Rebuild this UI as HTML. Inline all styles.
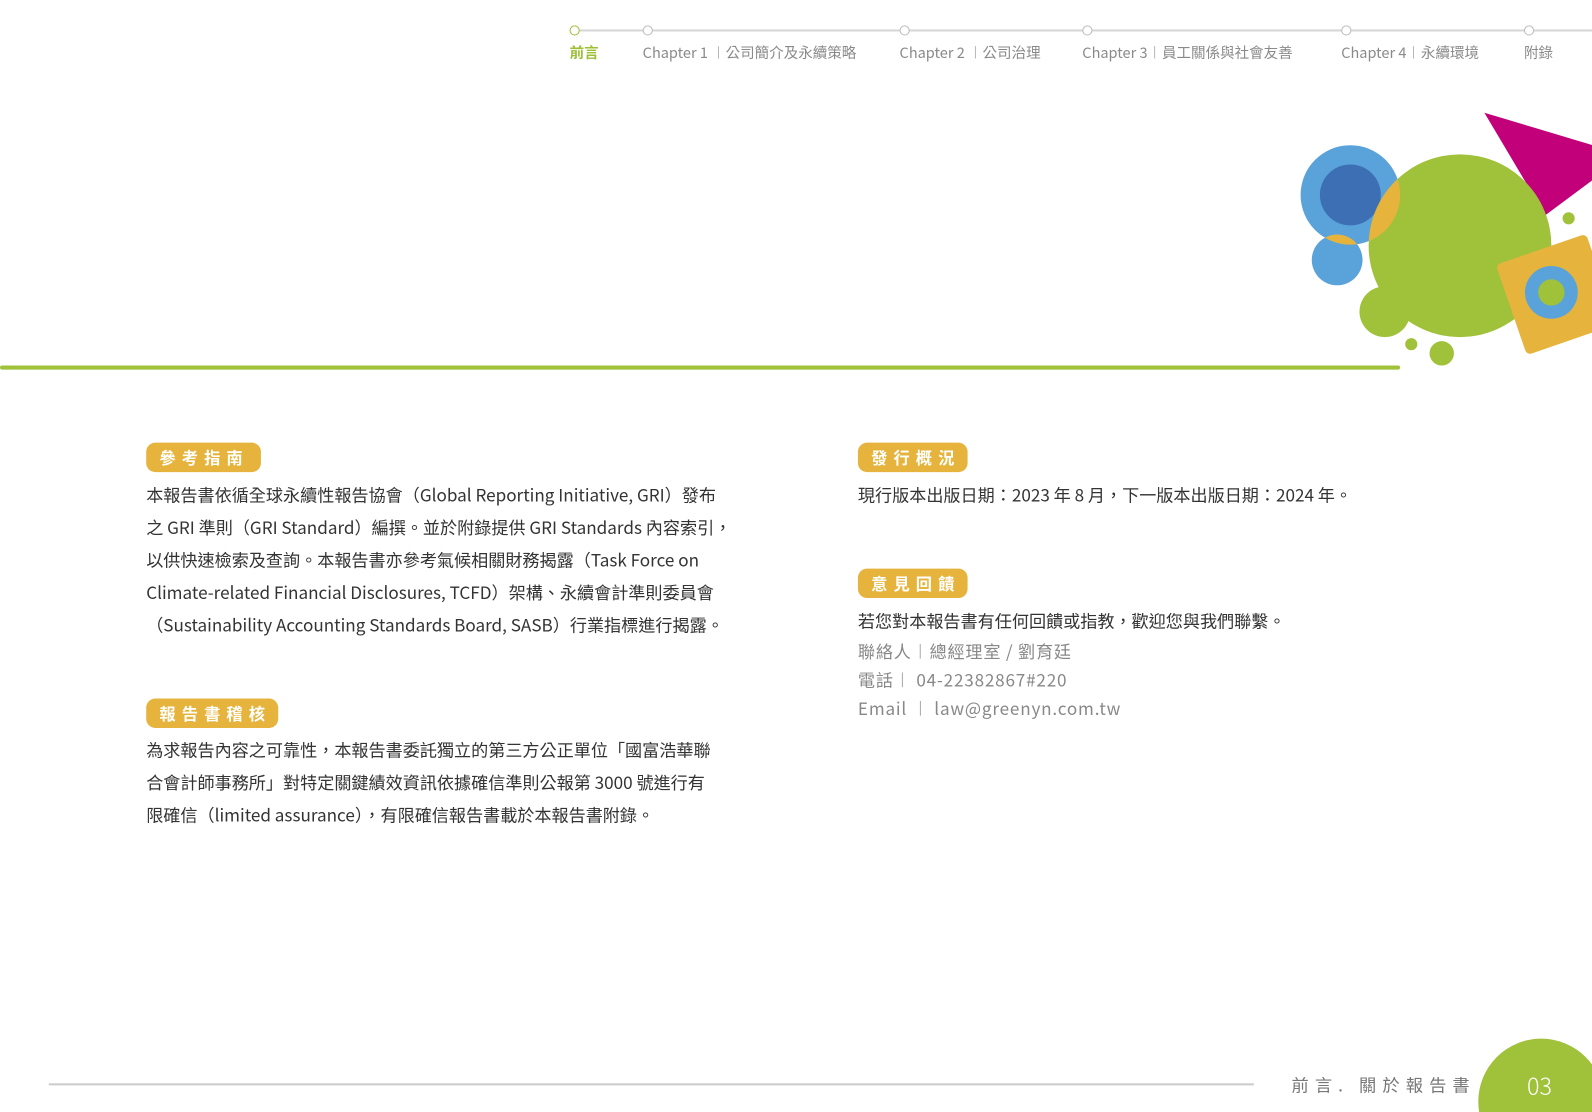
<!DOCTYPE html>
<html><head><meta charset="utf-8"><style>
*{margin:0;padding:0;box-sizing:border-box}
html,body{width:1592px;height:1112px;overflow:hidden;background:#fff}
#o{position:absolute;left:0;top:0;width:1592px;height:1112px;overflow:hidden}
#w{position:absolute;left:0;top:0;width:1592px;height:1112px;transform:scale(1.0153);transform-origin:0 0;font-family:"Noto Sans CJK TC","Liberation Sans",sans-serif;color:#333}
.a{position:absolute;white-space:nowrap}
.nav{font-size:14.3px;color:#8a8a8a;top:41px}
.dot{position:absolute;top:25px;width:10px;height:10px;border-radius:50%;border:1.5px solid #bbb;background:#fff}
.badge{position:absolute;height:29px;background:#e6b43c;border-radius:9px;color:#fff;font-size:16px;font-weight:bold;letter-spacing:6px;line-height:29px;padding-left:13px}
.p{position:absolute;font-size:16.85px;line-height:32px;white-space:nowrap;color:#333}
.g{color:#888;letter-spacing:0.8px}
</style></head><body><div id="o"><div id="w">
<div class="a" style="left:566px;top:29px;width:1026px;height:2px;background:#d6d6d6"></div>
<div class="dot" style="left:561px;border-color:#9dbf35"></div>
<div class="dot" style="left:633px"></div>
<div class="dot" style="left:886px"></div>
<div class="dot" style="left:1066px"></div>
<div class="dot" style="left:1321px"></div>
<div class="dot" style="left:1501px"></div>
<div class="a nav" style="left:561px;color:#9dbf35;font-weight:bold">前言</div>
<div class="a nav" style="left:633px">Chapter 1 ︱公司簡介及永續策略</div>
<div class="a nav" style="left:886px">Chapter 2 ︱公司治理</div>
<div class="a nav" style="left:1066px">Chapter 3︱員工關係與社會友善</div>
<div class="a nav" style="left:1321px">Chapter 4︱永續環境</div>
<div class="a nav" style="left:1501px">附錄</div>

<svg class="a" style="left:0;top:0" width="1592" height="400">
<rect x="0" y="360" width="1379" height="4" rx="2" fill="#a0c13a"/>
<polygon points="1462,111 1592,150 1592,160 1522,212" fill="#c2007a"/>
<circle cx="1330" cy="192" r="49" fill="#5aa2da"/>
<circle cx="1330" cy="192" r="30" fill="#3d6fb4"/>
<circle cx="1317" cy="256" r="25" fill="#5aa2da"/>
<circle cx="1438" cy="242" r="90" fill="#a0c13a"/>
<clipPath id="c1"><circle cx="1330" cy="192" r="49"/></clipPath>
<circle cx="1438" cy="242" r="90" fill="#e6b43c" clip-path="url(#c1)"/>
<clipPath id="c2"><circle cx="1317" cy="256" r="25"/></clipPath>
<circle cx="1330" cy="192" r="49" fill="#e6b43c" clip-path="url(#c2)"/>
<circle cx="1364" cy="307" r="25" fill="#a0c13a"/>
<circle cx="1390" cy="339" r="6" fill="#a0c13a"/>
<circle cx="1420" cy="348" r="12" fill="#a0c13a"/>
<circle cx="1545" cy="215" r="6" fill="#a0c13a"/>
<rect x="1486" y="243" width="94" height="94" rx="5" fill="#e6b43c" transform="rotate(-19 1533 290)"/>
<circle cx="1528" cy="288" r="26" fill="#5aa2da"/>
<circle cx="1528" cy="288" r="13" fill="#a0c13a"/>
</svg>

<div class="badge" style="left:144px;top:436px;width:113px">參考指南</div>
<div class="p" style="left:144px;top:471px">本報告書依循全球永續性報告協會（Global Reporting Initiative, GRI）發布<br>之 GRI 準則（GRI Standard）編撰。並於附錄提供 GRI Standards 內容索引，<br>以供快速檢索及查詢。本報告書亦參考氣候相關財務揭露（Task Force on<br>Climate-related Financial Disclosures, TCFD）架構、永續會計準則委員會<br>（Sustainability Accounting Standards Board, SASB）行業指標進行揭露。</div>

<div class="badge" style="left:144px;top:688px;width:130px">報告書稽核</div>
<div class="p" style="left:144px;top:722px">為求報告內容之可靠性，本報告書委託獨立的第三方公正單位「國富浩華聯<br>合會計師事務所」對特定關鍵績效資訊依據確信準則公報第 3000 號進行有<br>限確信（limited assurance），有限確信報告書載於本報告書附錄。</div>

<div class="badge" style="left:845px;top:436px;width:108px">發行概況</div>
<div class="p" style="left:845px;top:471px">現行版本出版日期：2023 年 8 月，下一版本出版日期：2024 年。</div>

<div class="badge" style="left:845px;top:560px;width:108px">意見回饋</div>
<div class="p" style="left:845px;top:595px">若您對本報告書有任何回饋或指教，歡迎您與我們聯繫。</div>
<div class="p g" style="left:845px;top:627px;line-height:28px">聯絡人︱總經理室 / 劉育廷<br>電話︱ 04-22382867#220<br>Email ︱ law@greenyn.com.tw</div>

<div class="a" style="left:48px;top:1067px;width:1187px;height:2px;background:#ccc"></div>
<div class="a" style="left:1272px;top:1055px;font-size:17px;letter-spacing:6px;color:#777">前言. 關於報告書</div>
<div class="a" style="left:1456px;top:1023px;width:124px;height:124px;border-radius:50%;background:#a0c13a"></div>
<div class="a" style="left:1504px;top:1051px;font-size:23px;color:#fff;font-weight:300">03</div>
</div></div></body></html>
